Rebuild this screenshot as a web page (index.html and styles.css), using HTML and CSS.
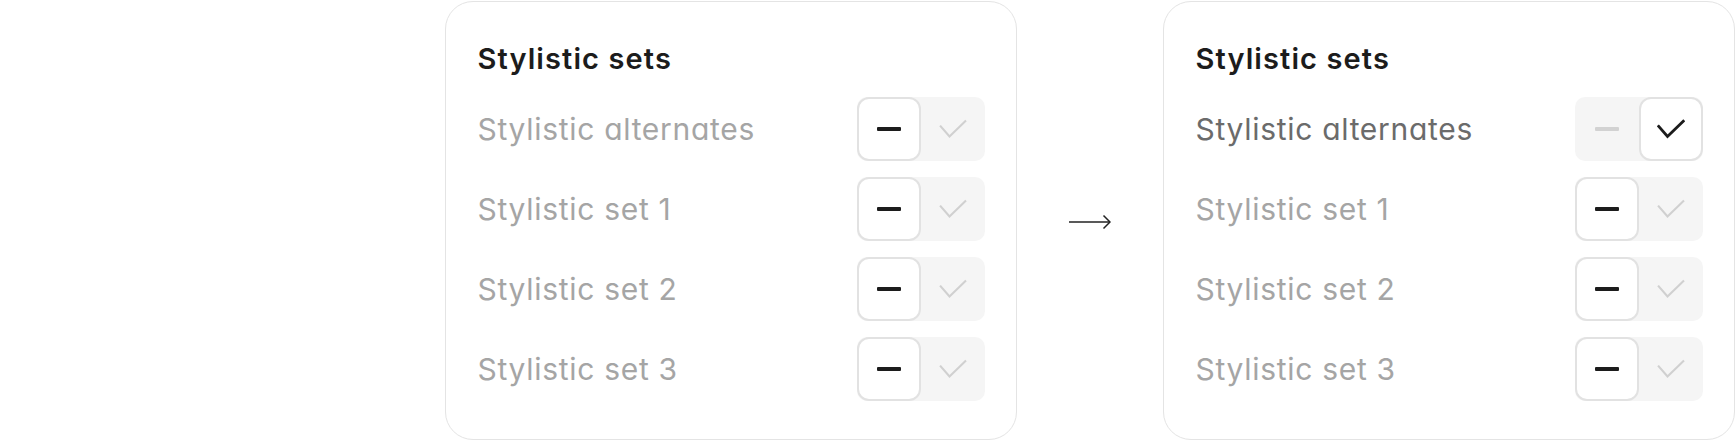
FILE: index.html
```html
<!DOCTYPE html>
<html lang="en">
<head>
<meta charset="utf-8">
<title>Stylistic sets</title>
<link rel="stylesheet" href="styles.css">
</head>
<body>
<main class="stage">
  <section class="card">
    <h2 class="card-title">Stylistic sets</h2>
    <ul class="rows">
      <li class="row">
        <span class="label">Stylistic alternates</span>
        <div class="toggle">
          <span class="seg seg-on"><span class="dash"></span></span>
          <span class="seg"><svg class="check check-off" viewBox="0 0 32 22"><polyline points="2,8 12,19.5 30,2"/></svg></span>
        </div>
      </li>
      <li class="row">
        <span class="label">Stylistic set 1</span>
        <div class="toggle">
          <span class="seg seg-on"><span class="dash"></span></span>
          <span class="seg"><svg class="check check-off" viewBox="0 0 32 22"><polyline points="2,8 12,19.5 30,2"/></svg></span>
        </div>
      </li>
      <li class="row">
        <span class="label">Stylistic set 2</span>
        <div class="toggle">
          <span class="seg seg-on"><span class="dash"></span></span>
          <span class="seg"><svg class="check check-off" viewBox="0 0 32 22"><polyline points="2,8 12,19.5 30,2"/></svg></span>
        </div>
      </li>
      <li class="row">
        <span class="label">Stylistic set 3</span>
        <div class="toggle">
          <span class="seg seg-on"><span class="dash"></span></span>
          <span class="seg"><svg class="check check-off" viewBox="0 0 32 22"><polyline points="2,8 12,19.5 30,2"/></svg></span>
        </div>
      </li>
    </ul>
  </section>

  <div class="arrow">
    <svg viewBox="0 0 42 16" width="42" height="16"><line x1="0" y1="8" x2="41" y2="8"/><polyline points="34.5,1.5 41,8 34.5,14.5"/></svg>
  </div>

  <section class="card">
    <h2 class="card-title">Stylistic sets</h2>
    <ul class="rows">
      <li class="row">
        <span class="label label-active">Stylistic alternates</span>
        <div class="toggle">
          <span class="seg"><span class="dash dash-off"></span></span>
          <span class="seg seg-on"><svg class="check" viewBox="0 0 32 22"><polyline points="2,8 12,19.5 30,2"/></svg></span>
        </div>
      </li>
      <li class="row">
        <span class="label">Stylistic set 1</span>
        <div class="toggle">
          <span class="seg seg-on"><span class="dash"></span></span>
          <span class="seg"><svg class="check check-off" viewBox="0 0 32 22"><polyline points="2,8 12,19.5 30,2"/></svg></span>
        </div>
      </li>
      <li class="row">
        <span class="label">Stylistic set 2</span>
        <div class="toggle">
          <span class="seg seg-on"><span class="dash"></span></span>
          <span class="seg"><svg class="check check-off" viewBox="0 0 32 22"><polyline points="2,8 12,19.5 30,2"/></svg></span>
        </div>
      </li>
      <li class="row">
        <span class="label">Stylistic set 3</span>
        <div class="toggle">
          <span class="seg seg-on"><span class="dash"></span></span>
          <span class="seg"><svg class="check check-off" viewBox="0 0 32 22"><polyline points="2,8 12,19.5 30,2"/></svg></span>
        </div>
      </li>
    </ul>
  </section>
</main>
</body>
</html>
```

FILE: styles.css
```css
* { box-sizing: border-box; }

html, body {
  margin: 0;
  padding: 0;
  background: #ffffff;
}

body {
  font-family: Inter, "Noto Sans", "Liberation Sans", sans-serif;
  font-feature-settings: "cv11" 1;
  color: #1c1c1c;
}

.stage {
  display: flex;
  align-items: center;
  gap: 52px;
  padding: 1px 0 0 445px;
  height: 441px;
}

.card {
  width: 572px;
  height: 439px;
  align-self: flex-start;
  border: 1.5px solid #e4e4e4;
  border-radius: 28px;
  padding: 38.5px 31px 38px 31.5px;
  display: flex;
  flex-direction: column;
}

.card-title {
  margin: 0 0 20px 0;
  font-size: 29px;
  line-height: 36px;
  font-weight: 600;
  color: #1c1c1c;
  letter-spacing: 1.1px;
}

.rows {
  list-style: none;
  margin: 0;
  padding: 0;
  display: flex;
  flex-direction: column;
  gap: 16px;
}

.row {
  display: flex;
  align-items: center;
  justify-content: space-between;
  height: 64px;
}

.label {
  font-size: 30px;
  line-height: 40px;
  font-weight: 400;
  color: #a5a5a5;
  letter-spacing: 0.7px;
}

.label-active {
  color: #6b6b6b;
}

.toggle {
  width: 128px;
  height: 64px;
  background: #f5f5f5;
  border-radius: 10px;
  display: grid;
  grid-template-columns: 64px 64px;
}

.seg {
  display: flex;
  align-items: center;
  justify-content: center;
  border-radius: 12px;
}

.seg-on {
  background: #ffffff;
  border: 2px solid #e2e2e2;
}

.dash {
  width: 24px;
  height: 4px;
  background: #1c1c1c;
  border-radius: 1px;
}

.dash-off {
  background: #d2d2d2;
}

.check {
  width: 28px;
  height: 20px;
  fill: none;
  stroke: #1c1c1c;
  stroke-width: 3.2;
  stroke-linecap: square;
  stroke-linejoin: miter;
}

.check-off {
  stroke: #d0d0d0;
  stroke-width: 2.4;
}

.arrow {
  display: flex;
  align-items: center;
  width: 42px;
  margin-top: 2px;
}

.arrow svg {
  fill: none;
  stroke: #222222;
  stroke-width: 1.5;
}
```
